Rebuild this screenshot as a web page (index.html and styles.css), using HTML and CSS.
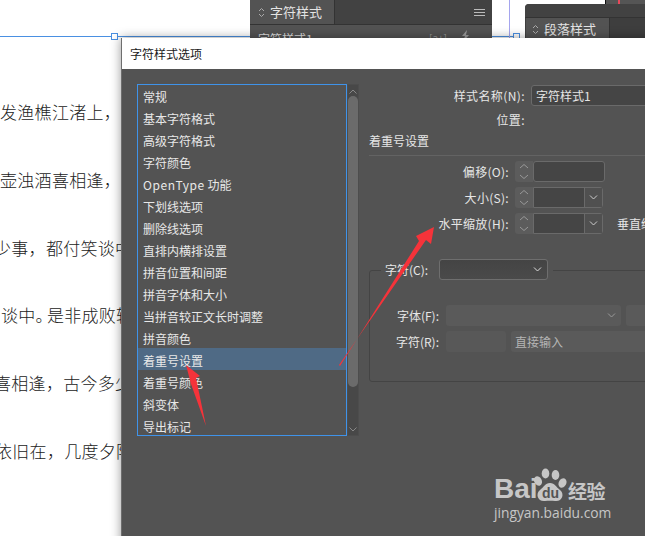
FILE: index.html
```html
<!DOCTYPE html>
<html lang="zh-CN">
<head>
<meta charset="utf-8">
<title>字符样式选项</title>
<link rel="stylesheet" href="styles.css">
</head>
<body>
<div class="stage">
  <div class="doc">
    <p class="line">发渔樵江渚上，</p>
    <p class="line">壶浊酒喜相逢，</p>
    <p class="line l3">少事，都付笑谈中</p>
    <p class="line l4">谈中<span class="punct">。</span>是非成败转</p>
    <p class="line l5">喜相逢，古今多少</p>
    <p class="line l6">依旧在，几度夕阳</p>
  </div>
  <div class="frame-line"></div>
  <div class="guide"></div>
  <div class="handle h-left"></div>
  <div class="handle h-right"></div>

  <div class="panel panel-char">
    <div class="panel-tabs">
      <div class="tab"><span class="updown"><svg width="7" height="11" viewBox="0 0 7 11"><path d="M1 4 3.5 1.5 6 4M1 7 3.5 9.5 6 7" fill="none" stroke="#aaa"/></svg></span>字符样式</div>
      <div class="tab-rest"><span class="menu-icon"></span></div>
    </div>
    <div class="panel-row"><span>字符样式1</span><span class="panel-tools"><span>[a+]</span><svg width="9" height="12" viewBox="0 0 9 12"><path d="M6 0 1 6h3L2 12l6-7H5z" fill="#999"/></svg></span></div>
  </div>

  <div class="panel panel-para">
    <div class="para-top"></div>
    <div class="panel-tabs">
      <div class="tab tab-para"><span class="updown"><svg width="7" height="11" viewBox="0 0 7 11"><path d="M1 4 3.5 1.5 6 4M1 7 3.5 9.5 6 7" fill="none" stroke="#aaa"/></svg></span>段落样式</div>
      <div class="tab-rest"></div>
    </div>
  </div>
  <div class="corner"></div>

  <div class="dialog">
    <div class="dialog-title">字符样式选项</div>
    <div class="dialog-body">
      <div class="list-wrap">
        <ul class="list">
          <li>常规</li>
          <li>基本字符格式</li>
          <li>高级字符格式</li>
          <li>字符颜色</li>
          <li><span class="latin">OpenType</span> 功能</li>
          <li>下划线选项</li>
          <li>删除线选项</li>
          <li>直排内横排设置</li>
          <li>拼音位置和间距</li>
          <li>拼音字体和大小</li>
          <li>当拼音较正文长时调整</li>
          <li>拼音颜色</li>
          <li class="selected">着重号设置</li>
          <li>着重号颜色</li>
          <li>斜变体</li>
          <li>导出标记</li>
        </ul>
        <div class="scrollbar">
          <svg class="sb-arrow" width="8" height="5" viewBox="0 0 8 5"><path d="M.5 4.5 4 1l3.5 3.5" fill="none" stroke="#888"/></svg>
          <div class="thumb"></div>
          <svg class="sb-arrow sb-down" width="8" height="5" viewBox="0 0 8 5"><path d="M.5.5 4 4 7.500.5" fill="none" stroke="#888"/></svg>
        </div>
      </div>

      <div class="form">
        <div class="row">
          <label class="lbl lbl-name">样式名称(N):</label>
          <div class="field field-name">字符样式1</div>
        </div>
        <div class="info-row"><span class="lbl lbl-name">位置:</span></div>
        <div class="heading">着重号设置</div>
        <div class="rule"></div>
        <div class="row row-s">
          <label class="lbl lbl-spin">偏移(O):</label>
          <span class="spin"><svg width="10" height="17" viewBox="0 0 10 17"><path d="M1 5 5 1.500 9 5M1 12l4 3.500L9 12" fill="none" stroke="#999"/></svg></span>
          <div class="field field-num"></div>
        </div>
        <div class="row row-s">
          <label class="lbl lbl-spin">大小(S):</label>
          <span class="spin"><svg width="10" height="17" viewBox="0 0 10 17"><path d="M1 5 5 1.500 9 5M1 12l4 3.500L9 12" fill="none" stroke="#999"/></svg></span>
          <div class="combo"><span class="combo-val"></span><span class="combo-btn"><svg width="9" height="5" viewBox="0 0 9 5"><path d="M1 .5 4.500 4 8 .5" fill="none" stroke="#ccc"/></svg></span></div>
        </div>
        <div class="row row-s">
          <label class="lbl lbl-spin">水平缩放(H):</label>
          <span class="spin"><svg width="10" height="17" viewBox="0 0 10 17"><path d="M1 5 5 1.500 9 5M1 12l4 3.500L9 12" fill="none" stroke="#999"/></svg></span>
          <div class="combo"><span class="combo-val"></span><span class="combo-btn"><svg width="9" height="5" viewBox="0 0 9 5"><path d="M1 .5 4.500 4 8 .5" fill="none" stroke="#ccc"/></svg></span></div>
          <span class="lbl-vert">垂直缩放(V):</span>
        </div>
        <div class="group">
          <div class="legend">
            <label class="lbl-legend">字符(C):</label>
            <div class="select-c"><svg width="9" height="5" viewBox="0 0 9 5"><path d="M1 .5 4.500 4 8 .5" fill="none" stroke="#ddd"/></svg></div>
          </div>
          <div class="row row-font">
            <label class="lbl lbl-group">字体(F):</label>
            <div class="disabled dis-font"><svg width="9" height="5" viewBox="0 0 9 5"><path d="M1 .5 4.500 4 8 .5" fill="none" stroke="#999"/></svg></div>
            <div class="disabled dis-style"></div>
          </div>
          <div class="row row-s">
            <label class="lbl lbl-group">字符(R):</label>
            <div class="disabled dis-char"></div>
            <div class="disabled dis-mode"><span>直接输入</span><svg width="9" height="5" viewBox="0 0 9 5"><path d="M1 .5 4.500 4 8 .5" fill="none" stroke="#999"/></svg></div>
          </div>
        </div>
      </div>
    </div>
  </div>

  <svg class="arrows" width="645" height="536" viewBox="0 0 645 536">
    <polygon points="339,365 340,366 419,241 416,236 434,227 431,244 426,240" fill="#f5333a"/>
    <polygon points="186,365 200,376 196,378 206,426 191,384" fill="#f5333a"/>
  </svg>

  <div class="watermark">
    <div class="wm-top">
      <span class="wm-bai">Bai</span>
      <svg class="wm-paw" width="33" height="36" viewBox="0 0 33 36">
        <ellipse cx="4" cy="13" rx="3.800" ry="5" transform="rotate(-25 4 13)" fill="#c6c6c6"/>
        <ellipse cx="11.500" cy="5.500" rx="3.800" ry="5" fill="#c6c6c6"/>
        <ellipse cx="21.500" cy="7" rx="3.800" ry="5" fill="#c6c6c6"/>
        <ellipse cx="28.500" cy="15" rx="3.800" ry="5" transform="rotate(25 28.500 15)" fill="#c6c6c6"/>
        <path d="M16 15c5 0 6 4 10 7 5 4 2 12-5 11-3-.5-7-.5-10 0-7 1-10-7-5-11 4-3 5-7 10-7z" fill="#c6c6c6"/>
        <text x="16.500" y="30" text-anchor="middle" class="wm-du">du</text>
      </svg>
      <span class="wm-cn">经验</span>
    </div>
    <div class="wm-url">jingyan.baidu.com</div>
  </div>
</div>
</body>
</html>
```
FILE: styles.css
```css
* { box-sizing: border-box; }
html, body { margin: 0; padding: 0; background: #fff; }
body { font-family: "Noto Sans CJK SC", "Noto Sans", sans-serif; font-size: 12px; color: #e6e6e6; }
.stage { position: relative; width: 645px; height: 536px; overflow: hidden; background: #fff; }

/* document behind the dialog */
.doc { position: absolute; left: 0; top: 100px; width: 121px; height: 436px; overflow: hidden; color: #222; font-size: 17px; font-weight: 300; }
.line { margin: 0 0 43.800px; height: 24px; line-height: 24px; white-space: nowrap; letter-spacing: .3px; }
.l3 { margin-left: -6px; }
.l4 { margin-left: 1px; }
.l5 { margin-left: -6px; }
.l6 { margin-left: -5px; }
.punct { margin-right: -6px; }

.frame-line { position: absolute; left: 0; top: 36px; width: 520px; height: 1px; background: #4a90e2; }
.guide { position: absolute; left: 509px; top: 0; width: 1px; height: 40px; background: #a5a5ee; }
.handle { position: absolute; width: 7px; height: 7px; background: #fff; border: 1px solid #4a90e2; }
.h-left { left: 111px; top: 33px; }
.h-right { left: 513px; top: 33px; }

/* floating panels */
.panel { position: absolute; background: #535353; color: #ddd; }
.panel-char { left: 250px; top: 0; width: 242px; height: 40px; }
.panel-tabs { display: flex; height: 25px; background: #424242; }
.panel-char .panel-tabs { border-bottom: 1px solid #333; }
.tab { display: flex; align-items: center; gap: 5px; width: 84px; height: 24px; padding-left: 8px; background: #535353; font-size: 13px; line-height: 18px; color: #e4e4e4; }
.tab-rest { flex: 1; display: flex; justify-content: flex-end; align-items: center; padding-right: 7px; border-left: 1px solid #333; }
.updown { display: flex; }
.menu-icon { width: 11px; height: 7px; border-top: 1px solid #bbb; border-bottom: 1px solid #bbb; background: linear-gradient(#bbb, #bbb) center / 100% 1px no-repeat; }
.panel-row { display: flex; justify-content: space-between; padding: 5px 22px 0 8px; }
.panel-tools { display: flex; gap: 14px; color: #999; font-size: 10px; }
.panel-para { left: 525px; top: 4px; width: 130px; height: 36px; border-radius: 4px 0 0 0; }
.para-top { height: 14px; background: #424242; border-radius: 4px 0 0 0; border-bottom: 1px solid #333; }
.panel-para .panel-tabs { height: 22px; background: #3e3e3e; }
.tab-para { margin-left: 1px; width: 83px; height: 22px; padding-left: 6px; }
.corner { position: absolute; left: 605px; top: 0; width: 40px; height: 4px; background: linear-gradient(90deg, #555 12px, #e8485a 12px, #e8485a 14px, #555 14px); border-left: 1px solid #111; }

/* dialog */
.dialog { position: absolute; left: 121px; top: 38px; width: 560px; height: 520px; background: #535353; border-left: 1px solid #6e6e6e; box-shadow: 0 0 10px rgba(0, 0, 0, .4); }
.dialog-title { height: 31px; padding: 7px 0 0 8px; background: #fff; color: #1a1a1a; font-size: 12px; line-height: 18px; }
.dialog-body { display: flex; align-items: flex-start; padding: 15px 0 0 15px; }

.list-wrap { display: flex; width: 222px; height: 352px; }
.list { list-style: none; margin: 0; padding: 0; width: 210px; height: 352px; outline: 1px solid #3f93ea; outline-offset: -1px; overflow: hidden; }
.list li { height: 22px; padding: 4px 0 0 6px; line-height: 18px; color: #e8e8e8; white-space: nowrap; }
.list .selected { background: #4f6a85; }
.latin { letter-spacing: .6px; }
.scrollbar { width: 12px; height: 352px; padding: 4px 1px 0; background: #484848; border: 1px solid #4d4d4d; display: flex; flex-direction: column; align-items: center; }
.thumb { width: 10px; height: 291px; margin-top: 2px; border-radius: 5px; background: #6b6b6b; flex: none; }
.sb-arrow { flex: none; }
.sb-down { margin-top: auto; margin-bottom: 3px; }

.form { width: 400px; margin-left: 10px; padding-top: 1px; flex: none; }
.row { display: flex; align-items: center; height: 21px; }
.row-s { margin-top: 5px; }
.lbl { text-align: right; white-space: nowrap; color: #e6e6e6; flex: none; }
.lbl-name { display: block; width: 156px; margin-right: 6px; letter-spacing: .4px; }
.lbl-spin { width: 140px; margin-right: 6px; letter-spacing: .3px; }
.lbl-group { width: 69px; margin-right: 7px; }
.info-row { height: 16px; margin-top: 6px; line-height: 16px; }
.heading { height: 16px; margin-top: 5px; line-height: 16px; }
.rule { height: 1px; margin-top: 6px; background: #636363; }
.field { height: 21px; background: #454545; border: 1px solid #6a6a6a; border-radius: 3px; line-height: 19px; }
.field-name { width: 130px; padding-left: 4px; }
.spin { display: flex; align-items: center; justify-content: center; width: 18px; height: 21px; background: #5c5c5c; border-radius: 3px 0 0 3px; flex: none; }
.field-num { width: 72px; }
.combo { display: flex; width: 70px; height: 21px; background: #454545; border: 1px solid #6a6a6a; border-radius: 0 3px 3px 0; }
.combo-val { flex: 1; }
.combo-btn { display: flex; align-items: center; justify-content: center; width: 18px; border-left: 1px solid #6a6a6a; background: #505050; }
.lbl-vert { margin-left: 14px; white-space: nowrap; }

.group { height: 112px; margin-top: 36px; border: 1px solid #444; border-radius: 3px; }
.legend { display: flex; align-items: center; gap: 11px; width: 172px; height: 21px; margin: -12px 0 0 11px; padding-left: 4px; background: #535353; }
.select-c { display: flex; align-items: center; justify-content: flex-end; width: 109px; height: 21px; padding-right: 5px; background: linear-gradient(#444, #4a4a4a); border: 1px solid #6e6e6e; border-radius: 3px; flex: none; }
.row-font { margin-top: 25px; }
.disabled { display: flex; align-items: center; justify-content: flex-end; height: 21px; padding-right: 5px; background: #5a5a5a; border-radius: 3px; color: #b5b5b5; flex: none; }
.dis-font { width: 175px; }
.dis-style { width: 60px; margin-left: 5px; }
.dis-char { width: 60px; background: #585858; }
.dis-mode { width: 150px; margin-left: 5px; justify-content: space-between; padding: 0 0 0 4px; }
.dis-mode svg { margin-right: 5px; }

/* annotations */
.arrows { position: absolute; left: 0; top: 0; pointer-events: none; }

/* watermark */
.watermark { position: absolute; left: 494px; top: 467px; width: 116px; color: #c6c6c6; }
.wm-top { display: flex; align-items: flex-end; height: 37px; }
.wm-bai { font-family: "Liberation Sans", sans-serif; font-size: 28px; font-weight: 700; line-height: 30px; width: 41px; flex: none; }
.wm-paw { flex: none; margin-left: -1px; }
.wm-du { font-family: "Liberation Sans", sans-serif; font-size: 14px; font-weight: 700; fill: #535353; }
.wm-cn { font-size: 19px; font-weight: 700; line-height: 26px; margin-left: 1px; white-space: nowrap; letter-spacing: -.5px; }
.wm-url { font-family: "Open Sans", sans-serif; font-size: 13.800px; line-height: 18px; white-space: nowrap; }
```
